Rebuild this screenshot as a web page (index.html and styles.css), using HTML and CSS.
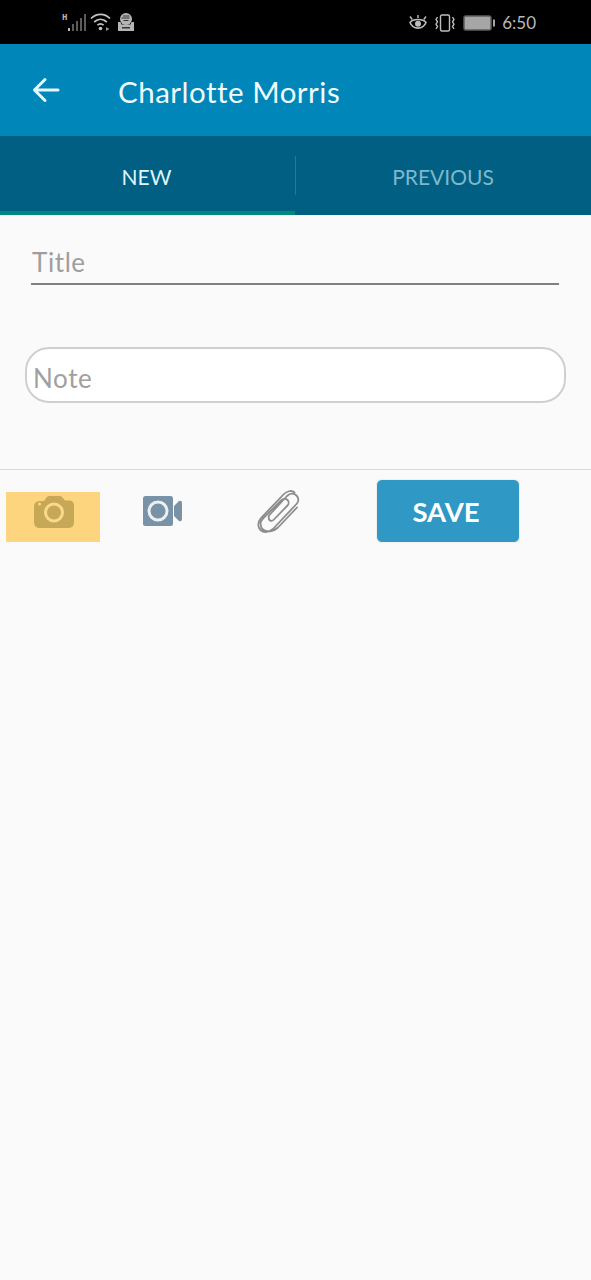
FILE: index.html
```html
<!DOCTYPE html>
<html lang="en">
<head>
<meta charset="utf-8">
<title>Charlotte Morris</title>
<link rel="stylesheet" href="styles.css">
</head>
<body>
<div class="status">
  <div class="status-left">
    <svg class="ic-signal" width="26" height="20" viewBox="0 0 26 20">
      <text x="0" y="8" class="h-mark">H</text>
      <rect x="6" y="16" width="2" height="3" fill="#bdbdbd"/>
      <rect x="10" y="12" width="2" height="7" fill="#5c5c5c"/>
      <rect x="14" y="9" width="2" height="10" fill="#5c5c5c"/>
      <rect x="18" y="6" width="2" height="13" fill="#5c5c5c"/>
      <rect x="22" y="2" width="2" height="17" fill="#5c5c5c"/>
    </svg>
    <svg width="22" height="20" viewBox="0 0 22 20" fill="none" stroke="#c4c4c4" stroke-width="1.7">
      <path d="M1 6.500C6.500 1 14.500 1 20 6.500"/>
      <path d="M4.200 10C8 6.500 13 6.500 16.800 10"/>
      <path d="M7.400 13.200C9.400 11.500 11.600 11.500 13.600 13.200"/>
      <circle cx="10.500" cy="16.500" r="1.800" fill="#c4c4c4" stroke="none"/>
      <path d="M16 15v4l3.500-2z" fill="#8f8f8f" stroke="none"/>
    </svg>
    <svg class="ic-vpn" width="18" height="20" viewBox="0 0 18 20">
      <circle cx="9" cy="7" r="6" fill="#b5b5b5"/>
      <path d="M4.500 6h8M6 4h6.500M6.500 8.500h5" stroke="#333" stroke-width="1" fill="none"/>
      <path d="M1 10h2.500l1 2.500h9l1-2.500H17v9H1z" fill="#b5b5b5"/>
      <path d="M5 15h8v1.500H5z" fill="#333"/>
    </svg>
  </div>
  <div class="status-right">
    <svg width="20" height="18" viewBox="0 0 20 18" fill="none" stroke="#bdbdbd" stroke-width="1.600">
      <path d="M2 8.500C5 4.500 15 4.500 18 8.500C15 16 5 16 2 8.500z"/>
      <circle cx="10" cy="9.800" r="3" fill="#bdbdbd" stroke="none"/>
      <path d="M2 2.500l2.200 3M10 1v3M18 2.500l-2.200 3" stroke-width="1.400"/>
    </svg>
    <svg width="22" height="18" viewBox="0 0 22 18" fill="none" stroke="#bdbdbd" stroke-width="1.400">
      <rect x="6.500" y="1" width="9" height="16" rx="1.500"/>
      <path d="M3.500 3l-1.500 2.400 1.500 2.400-1.500 2.400 1.500 2.400-1.500 2.400M18.500 3l1.500 2.400-1.500 2.400 1.500 2.400-1.500 2.400 1.500 2.400"/>
    </svg>
    <svg class="ic-batt" width="33" height="16" viewBox="0 0 33 16">
      <rect x="1" y="1" width="27" height="14" rx="2" fill="#a6a6a6" stroke="#5e5e5e" stroke-width="1.500"/>
      <rect x="30" y="4.500" width="2" height="7" fill="#a6a6a6"/>
    </svg>
    <span class="clock">6:50</span>
  </div>
</div>

<header class="appbar">
  <svg class="back" width="28" height="26" viewBox="0 0 28 26" fill="none" stroke="#e6f7fc" stroke-width="3" stroke-linecap="round" stroke-linejoin="round">
    <path d="M26 13H3M13 2.500L2.500 13 13 23.500"/>
  </svg>
  <h1 class="appbar-title">Charlotte Morris</h1>
</header>

<nav class="tabs">
  <div class="tab tab-active">NEW</div>
  <div class="tab">PREVIOUS</div>
</nav>

<main class="form">
  <div class="title-field">Title</div>
  <div class="note-field">Note</div>
</main>

<section class="actions">
  <div class="act act-camera">
    <svg width="40" height="32" viewBox="0 0 40 32">
      <path d="M6 5h4l2.500-3.500Q13.500 0 15 0h11q1.500 0 2.500 1.500L31 4.500h4q5 0 5 5V26q0 6-6 6H6q-6 0-6-6V11q0-6 6-6z" fill="#c6a857"/>
      <circle cx="20" cy="16.500" r="8.500" fill="none" stroke="#fbd98a" stroke-width="3"/>
      <circle cx="5.500" cy="8" r="1.500" fill="#fbd98a"/>
    </svg>
  </div>
  <div class="act act-video">
    <svg width="40" height="30" viewBox="0 0 40 30">
      <rect width="30" height="30" rx="2.500" fill="#7a92a6"/>
      <circle cx="15" cy="15" r="9" fill="none" stroke="#eaf0f4" stroke-width="3"/>
      <path d="M31 10l5-5q3-1 3 2v16q0 3-3 2l-5-5z" fill="#7a92a6"/>
    </svg>
  </div>
  <div class="act act-clip">
    <svg width="44" height="47" viewBox="0 0 44 46" fill="none" stroke="#8d8d8d" stroke-width="1.800" stroke-linecap="round" stroke-linejoin="round">
      <path d="M13 28L31 8.500c3-3 7-3 9.500-.5s2.500 6 0 8.500L17 41.500c-3.500 3.500-9.500 4-12.500 1s-3-8 .5-12L27.500 7c3-3 8-5 11-2M41 20L22 40c-4.500 4.500-11.500 5-15 2s-3-8 0-11L25 13c2-2 5-2 6.500-.5s1.500 4 0 5.500L18 32c-1.500 1.500-3.500 1.500-4.500.5s-1-2.500-.5-4.500"/>
    </svg>
  </div>
  <button class="save">SAVE</button>
</section>
</body>
</html>
```
FILE: styles.css
```css
* { box-sizing: border-box; }
html, body { margin: 0; padding: 0; }
body {
  width: 591px;
  height: 1280px;
  overflow: hidden;
  background: #fafafa;
  font-family: "Lato", "Open Sans", sans-serif;
}
.status {
  height: 44px;
  background: #000;
  display: flex;
  justify-content: space-between;
  align-items: center;
  padding: 0 55px 0 62px;
}
.status-left { display: flex; align-items: center; gap: 2px; }
.ic-vpn { margin-left: 3px; }
.status-right { display: flex; align-items: center; gap: 6px; margin-top: 1px; }
.ic-batt { margin-left: 1px; }
.h-mark { font: bold 9px "Liberation Mono", monospace; fill: #b5b5b5; }
.clock { color: #b9b9b9; font: 17px "Lato", sans-serif; }
.appbar {
  height: 92px;
  background: #0086b8;
  display: flex;
  align-items: center;
  padding: 0 0 0 32px;
}
.back { flex: none; }
.appbar-title {
  margin: 2px 0 0 58px;
  font-size: 29.500px;
  font-weight: 400;
  color: #f0fbfe;
  letter-spacing: .5px;
}
.tabs {
  height: 79px;
  background: #005f82;
  display: flex;
}
.tab {
  flex: 1;
  display: flex;
  align-items: center;
  justify-content: center;
  padding: 5px 0 4px;
  font-size: 21px;
  color: #7fb8cc;
  position: relative;
}
.tab-active {
  flex: none;
  width: 295px;
  color: #dff5fb;
  border-bottom: 4px solid #00877f;
  padding: 5px 2px 0 0;
}
.tab + .tab::before {
  content: "";
  position: absolute;
  left: 0;
  top: 20px;
  height: 39px;
  width: 1px;
  background: #26779a;
}
.form { padding: 32px 25px 0; }
.title-field {
  margin: 0 7px 0 6px;
  height: 38px;
  border-bottom: 2px solid #808080;
  font-size: 26px;
  line-height: 31px;
  color: #9e9e9e;
  padding-left: 1px;
  letter-spacing: .6px;
}
.note-field {
  margin-top: 62px;
  height: 56px;
  background: #fff;
  border: 2px solid #cfcfcf;
  border-radius: 24px;
  font-size: 26px;
  line-height: 58px;
  padding-left: 6px;
  color: #a0a0a0;
  letter-spacing: .6px;
}
.actions {
  margin-top: 66px;
  height: 74px;
  border-top: 1px solid #d9d9d9;
  display: flex;
  padding-left: 6px;
}
.act { display: flex; align-items: center; justify-content: center; }
.act-camera {
  width: 94px;
  height: 50px;
  margin-top: 22px;
  background: #fed57f;
  padding-bottom: 10px;
  padding-left: 2px;
}
.act-video {
  width: 40px;
  height: 30px;
  margin: 26px 0 0 43px;
}
.act-clip {
  width: 44px;
  height: 47px;
  margin: 17px 0 0 73px;
}
.save {
  width: 144px;
  height: 64px;
  margin: 9px 0 0 76px;
  background: #3098c4;
  border: 1px solid #f3f0ec;
  border-radius: 6px;
  color: #fff;
  font: 700 27.500px "Lato", sans-serif;
  padding: 1px 4px 0 0;
}
```
